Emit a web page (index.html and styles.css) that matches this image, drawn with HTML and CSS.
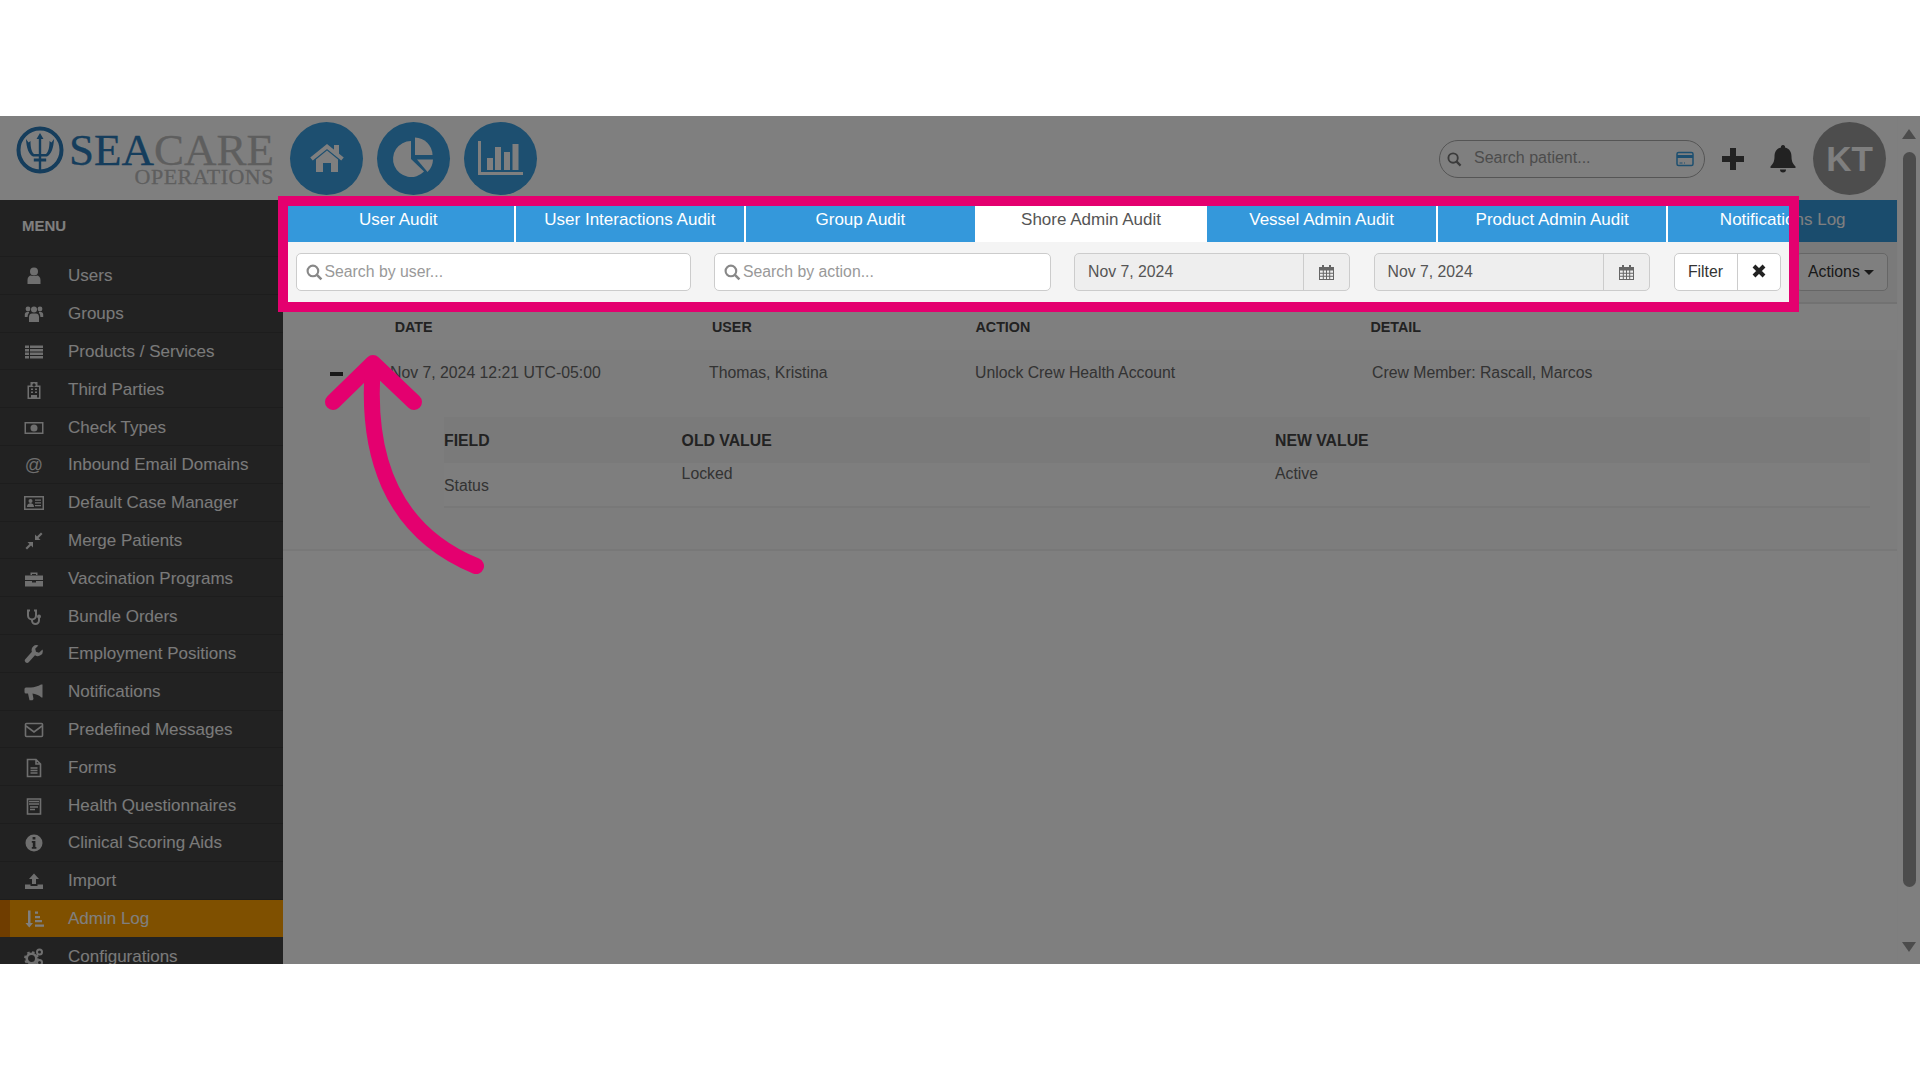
FILE: index.html
```html
<!DOCTYPE html>
<html lang="en">
<head>
<meta charset="utf-8">
<title>Seacare Operations - Admin Log</title>
<link rel="stylesheet" href="styles.css">
</head>
<body>
<div class="band-top"></div>
<div class="stage">
  <div class="app">
    <header class="topbar">
      <div class="logo">
        <svg class="logo-mark" viewBox="0 0 48 48">
          <circle cx="24" cy="24" r="21.5" fill="none" stroke="currentColor" stroke-width="4"/>
          <path d="M24 7l3.5 6h-2.3v19.5h5v3h-5V44h-2.4v-8.500h-5v-3h5V13h-2.300z" fill="currentColor"/>
          <path d="M10 13c.5 9 2.500 15 7 17.500h14C35.500 28 37.500 22 38 13l-2.500 3.500-2-1.500c0 6-.8 10.500-3.500 13H18c-2.700-2.500-3.500-7-3.500-13l-2 1.500z" fill="currentColor"/>
        </svg>
        <div class="logo-text">
          <div class="logo-name"><span class="logo-sea">SEA</span>CARE</div>
          <div class="logo-sub">OPERATIONS</div>
        </div>
      </div>
      <nav class="round-nav">
        <div class="round-btn">
          <svg viewBox="0 0 73 73"><path d="M26 37.500L37 28.500l11 9V50h-7v-9h-8v9h-7z" fill="#fff"/><path d="M44 23h5v10h-5z" fill="#fff"/><path d="M21.500 37L37 24.500 52.500 37" fill="none" stroke="#fff" stroke-width="4"/></svg>
        </div>
        <div class="round-btn">
          <svg viewBox="0 0 73 73"><path d="M34 37V19A18 18 0 1 0 47 49.500z" fill="#fff"/><path d="M38 15.500A18 18 0 0 1 55.500 33H38z" fill="#fff"/><path d="M40 37.500h16A18 18 0 0 1 50.500 50z" fill="#fff"/></svg>
        </div>
        <div class="round-btn">
          <svg viewBox="0 0 73 73"><path d="M15.500 19v32.500H59" fill="none" stroke="#fff" stroke-width="3"/><path d="M23 36h6v12h-6zM31 25h6v23h-6zM40 30h6v18h-6zM48.500 22h6v26h-6z" fill="#fff"/></svg>
        </div>
      </nav>
      <div class="top-right">
        <div class="patient-search">
          <svg class="ps-icon" viewBox="0 0 16 16"><circle cx="6.500" cy="6.500" r="5" fill="none" stroke="currentColor" stroke-width="2"/><path d="M10 10l4.500 4.500" stroke="currentColor" stroke-width="2.400"/></svg>
          <span class="ps-text">Search patient...</span>
          <svg class="ps-card" viewBox="0 0 18 16"><rect x="1" y="1.500" width="16" height="13" rx="1.500" fill="none" stroke="currentColor" stroke-width="1.500"/><path d="M1 4h16v3H1z" fill="currentColor"/><path d="M3.500 12h3M8 12h1" stroke="currentColor"/></svg>
        </div>
        <svg class="plus-icon" viewBox="0 0 22 22"><path d="M8 0h6v8h8v6h-8v8H8v-8H0V8h8z" fill="currentColor"/></svg>
        <svg class="bell-icon" viewBox="0 0 26 28"><path d="M13 0a2 2 0 0 1 2 2.500c4.500 1 6.500 4.500 6.500 9 0 5 1.500 7.500 4 10v1.500H.5v-1.500c2.500-2.500 4-5 4-10 0-4.500 2-8 6.500-9A2 2 0 0 1 13 0z" fill="currentColor"/><path d="M10 24.500h6a3 3 0 0 1-6 0z" fill="currentColor"/></svg>
        <div class="avatar">KT</div>
      </div>
    </header>
    <div class="body-row">
      <aside class="sidebar">
        <div class="menu-title">MENU</div>
        <ul class="menu">
          <li class="menu-item"><svg class="ico" viewBox="0 0 20 20"><circle cx="10" cy="5.500" r="4"/><path d="M3.500 18v-4c0-3 2-4.500 3.500-4.500 1 .8 5 .8 6 0 1.500 0 3.500 1.500 3.500 4.500v4z"/></svg>Users</li>
          <li class="menu-item"><svg class="ico" viewBox="0 0 20 20"><circle cx="4" cy="5" r="2.400"/><circle cx="16" cy="5" r="2.400"/><circle cx="10" cy="5.500" r="3"/><path d="M5 18v-5c0-2.500 1.500-3.500 3-3.500h4c1.500 0 3 1 3 3.500v5z"/><path d="M.8 13v-2.500C.8 9 1.800 8 3 8h2v1c-1 1-1.400 2.500-1.400 4zM19.200 13v-2.500C19.200 9 18.200 8 17 8h-2v1c1 1 1.400 2.500 1.400 4z"/></svg>Groups</li>
          <li class="menu-item"><svg class="ico" viewBox="0 0 20 20"><path d="M1 3.500h4V6H1zM6 3.500h13V6H6zM1 7h4v2.500H1zM6 7h13v2.500H6zM1 10.500h4V13H1zM6 10.500h13V13H6zM1 14h4v2.500H1zM6 14h13v2.500H6z"/></svg>Products / Services</li>
          <li class="menu-item"><svg class="ico" viewBox="0 0 20 20"><path fill-rule="evenodd" d="M3.500 5.500h3V2h7v3.500h3V19h-13zM5 7v10.500h2V15h6v2.500h2V7zM9 3.500v1H8v1h1v1h2v-1h1v-1h-1v-1zM7 8.500h2V10H7zM11 8.500h2V10h-2zM7 11.500h2V13H7zM11 11.500h2V13h-2z"/></svg>Third Parties</li>
          <li class="menu-item"><svg class="ico" viewBox="0 0 20 20"><path fill-rule="evenodd" d="M.5 4h19v12H.5zM2 5.500v9h16v-9zM10 6.500a3.500 3.500 0 1 1 0 7 3.500 3.500 0 0 1 0-7z"/></svg>Check Types</li>
          <li class="menu-item"><span class="ico ico-text">@</span>Inbound Email Domains</li>
          <li class="menu-item"><svg class="ico" viewBox="0 0 20 20"><path fill-rule="evenodd" d="M0 3h20v14H0zM1.500 4.500v11h17v-11z"/><circle cx="6.500" cy="8" r="2"/><path d="M3 14c0-3 2-3.800 3.500-3.800S10 11 10 14zM11 6.500h6v1.300h-6zM11 9.300h6v1.300h-6zM11 12h6v1.300h-6z"/></svg>Default Case Manager</li>
          <li class="menu-item"><svg class="ico" viewBox="0 0 20 20"><path d="M11 9V3.500l2 2 4-4L18.500 3l-4 4 2 2zM9 11v5.500l-2-2-4 4L1.500 17l4-4-2-2z"/></svg>Merge Patients</li>
          <li class="menu-item"><svg class="ico" viewBox="0 0 20 20"><path d="M1 6.500h18V11H1zM1 12h7v1.500h4V12h7v5.500H1zM6.500 6V3.500h7V6H12V5H8v1z"/></svg>Vaccination Programs</li>
          <li class="menu-item"><svg class="ico" viewBox="0 0 20 20"><g fill="none" stroke="currentColor" stroke-width="2"><path d="M6 3.500H4v5a4 4 0 0 0 8 0v-5h-2"/><path d="M8 12.500v1a3.500 3.500 0 0 0 7 0V11"/></g><circle cx="15" cy="9.500" r="2"/></svg>Bundle Orders</li>
          <li class="menu-item"><svg class="ico" viewBox="0 0 20 20"><path d="M18.500 5.500L15 8.700l-3-1-.8-3 3.200-3.200a5 5 0 0 0-6.500 6.300L1.500 15a2.200 2.200 0 0 0 3.200 3.200l6.300-6.900a5 5 0 0 0 7.500-5.800z"/></svg>Employment Positions</li>
          <li class="menu-item"><svg class="ico" viewBox="0 0 20 20"><path d="M18.500 2.500v13h-1c-3-2.500-6-3.700-9-4l1 5.500-1 1.200h-3L4 11.500H2A1.500 1.500 0 0 1 .5 10V7A1.500 1.500 0 0 1 2 5.500h5c3.500-.2 7-1.200 10-3z"/></svg>Notifications</li>
          <li class="menu-item"><svg class="ico ico-line" viewBox="0 0 20 20"><rect x="1.500" y="3.500" width="17" height="13" rx="1"/><path d="M2 6l8 6 8-6"/></svg>Predefined Messages</li>
          <li class="menu-item"><svg class="ico ico-line" viewBox="0 0 20 20"><path d="M3.500 1.500h8.500l4.500 4.500v12.500h-13zM12 1.500V6h4.500"/><path d="M6.500 10h7M6.500 12.500h7M6.500 15h7"/></svg>Forms</li>
          <li class="menu-item"><svg class="ico ico-line" viewBox="0 0 20 20"><path d="M3.500 3h13v15h-13z"/><path d="M5 5.500h10M5 8h10M6 11h8M6 13.500h5"/></svg>Health Questionnaires</li>
          <li class="menu-item"><svg class="ico" viewBox="0 0 20 20"><path fill-rule="evenodd" d="M10 1.500a8.500 8.500 0 1 0 0 17 8.500 8.500 0 0 0 0-17zM8.600 4h2.800v2.600H8.600zM7.800 8h3.600v6h1v1.800H7.800V14h1V9.800h-1z"/></svg>Clinical Scoring Aids</li>
          <li class="menu-item"><svg class="ico" viewBox="0 0 20 20"><path d="M10 2.500l5 5.500h-3v5H8V8H5zM1 13.500h5.500V15h7v-1.500H19V18H1z"/></svg>Import</li>
          <li class="menu-item is-active"><svg class="ico" viewBox="0 0 20 20"><path d="M4 1.500h2.500V14H9l-3.750 4.500L1.500 14H4zM11 2.500h3v2.200h-3zM11 7h5v2.200h-5zM11 11h7v2.200h-7zM11 15.500h9v2.200h-9z"/></svg>Admin Log</li>
          <li class="menu-item"><svg class="ico" viewBox="0 0 20 20"><circle cx="7.500" cy="11.500" r="4.800" fill="none" stroke="currentColor" stroke-width="2.600"/><circle cx="7.500" cy="11.500" r="6.400" fill="none" stroke="currentColor" stroke-width="2" stroke-dasharray="2.500 2.500"/><circle cx="15.500" cy="5" r="2.500" fill="none" stroke="currentColor" stroke-width="2"/><circle cx="15.500" cy="15.500" r="2.500" fill="none" stroke="currentColor" stroke-width="2"/></svg>Configurations</li>
        </ul>
      </aside>
      <main class="content">
        <div class="tabs">
          <div class="tab">User Audit</div>
          <div class="tab">User Interactions Audit</div>
          <div class="tab">Group Audit</div>
          <div class="tab is-current">Shore Admin Audit</div>
          <div class="tab">Vessel Admin Audit</div>
          <div class="tab">Product Admin Audit</div>
          <div class="tab">Notifications Log</div>
        </div>
        <div class="filters">
          <div class="field field-user">
            <svg class="field-search" viewBox="0 0 16 16"><circle cx="6.500" cy="6.500" r="5" fill="none" stroke="currentColor" stroke-width="2"/><path d="M10 10l4.500 4.500" stroke="currentColor" stroke-width="2.400"/></svg>
            <span class="placeholder">Search by user...</span>
          </div>
          <div class="field field-action">
            <svg class="field-search" viewBox="0 0 16 16"><circle cx="6.500" cy="6.500" r="5" fill="none" stroke="currentColor" stroke-width="2"/><path d="M10 10l4.500 4.500" stroke="currentColor" stroke-width="2.400"/></svg>
            <span class="placeholder">Search by action...</span>
          </div>
          <div class="date-field date-from">
            <span class="date-value">Nov 7, 2024</span>
            <span class="date-addon"><svg class="cal" viewBox="0 0 15 15"><path fill-rule="evenodd" d="M3 0h2v2h5V0h2v2h3v13H0V2h3zM1 5.500v2.300h2.800V5.500zM4.800 5.500v2.300h2.200V5.500zM8 5.500v2.300h2.200V5.500zM11.200 5.500v2.300H14V5.500zM1 8.800v2h2.800v-2zM4.800 8.800v2h2.200v-2zM8 8.800v2h2.200v-2zM11.200 8.800v2H14v-2zM1 11.800V14h2.800v-2.200zM4.800 11.800V14h2.200v-2.200zM8 11.800V14h2.200v-2.200zM11.200 11.800V14H14v-2.200z"/></svg></span>
          </div>
          <div class="date-field date-to">
            <span class="date-value">Nov 7, 2024</span>
            <span class="date-addon"><svg class="cal" viewBox="0 0 15 15"><path fill-rule="evenodd" d="M3 0h2v2h5V0h2v2h3v13H0V2h3zM1 5.500v2.300h2.800V5.500zM4.800 5.500v2.300h2.200V5.500zM8 5.500v2.300h2.200V5.500zM11.200 5.500v2.300H14V5.500zM1 8.800v2h2.800v-2zM4.800 8.800v2h2.200v-2zM8 8.800v2h2.200v-2zM11.200 8.800v2H14v-2zM1 11.800V14h2.800v-2.200zM4.800 11.800V14h2.200v-2.200zM8 11.800V14h2.200v-2.200zM11.200 11.800V14H14v-2.200z"/></svg></span>
          </div>
          <div class="btn-group">
            <span class="btn-filter">Filter</span>
            <span class="btn-clear"><svg viewBox="0 0 14 14"><path d="M2 2l10 10M12 2L2 12" stroke="currentColor" stroke-width="4"/></svg></span>
          </div>
          <div class="btn-actions">Actions<span class="caret"></span></div>
        </div>
        <div class="log-head">
          <span>DATE</span><span>USER</span><span>ACTION</span><span>DETAIL</span>
        </div>
        <section class="log-entry">
          <div class="log-row">
            <span class="minus"></span>
            <span>Nov 7, 2024 12:21 UTC-05:00</span>
            <span>Thomas, Kristina</span>
            <span>Unlock Crew Health Account</span>
            <span>Crew Member: Rascall, Marcos</span>
          </div>
          <div class="changes">
            <div class="changes-head"><span>FIELD</span><span>OLD VALUE</span><span>NEW VALUE</span></div>
            <div class="changes-row"><span class="cell-mid">Status</span><span>Locked</span><span>Active</span></div>
          </div>
        </section>
      </main>
    </div>
  </div>
  <div class="scrollbar">
    <span class="sb-up"></span>
    <span class="sb-thumb"></span>
    <span class="sb-down"></span>
  </div>
  <div class="spotlight"></div>
  <svg class="arrow" viewBox="0 0 180 250">
    <g fill="none" stroke="#e4006f" stroke-width="16" stroke-linecap="round" stroke-linejoin="round">
      <path d="M13 62L53 23l41 39"/>
      <path d="M53 25C46 110 68 190 156 226"/>
    </g>
  </svg>
</div>
<div class="band-bottom"></div>
</body>
</html>
```
FILE: styles.css
```css
* { box-sizing: border-box; }
html, body { margin: 0; padding: 0; background: #fff; }
body { font-family: "Liberation Sans", Arial, sans-serif; font-size: 15.800px; color: #666; width: 1920px; height: 1080px; overflow: hidden; }
ul { list-style: none; margin: 0; padding: 0; }

.band-top { height: 116px; }
.band-bottom { height: 116px; }
.stage { position: relative; height: 848px; display: flex; overflow: hidden; background: #fff; }
.app { width: 1897px; display: flex; flex-direction: column; }

/* header */
.topbar { height: 84px; flex: none; display: flex; align-items: flex-start; padding-right: 11px; }
.logo { width: 290px; flex: none; display: flex; padding: 10px 0 0 16px; }
.logo-mark { width: 48px; height: 48px; flex: none; color: #2a7ab8; }
.logo-text { margin-left: 3px; font-family: "Liberation Serif", "Times New Roman", serif; text-align: right; width: 207px; color: #bdbdbd; -webkit-text-stroke: .3px currentColor; }
.logo-name { font-size: 45px; line-height: 38px; margin-top: 5px; white-space: nowrap; }
.logo-sea { color: #2a7ab8; }
.logo-sub { font-size: 22px; line-height: 14px; margin-top: 1px; white-space: nowrap; letter-spacing: .5px; }
.round-nav { display: flex; gap: 14px; padding-top: 6px; }
.round-btn { width: 73px; height: 73px; border-radius: 50%; background: #3a9fe0; }
.round-btn svg { display: block; width: 73px; height: 73px; }
.top-right { margin-left: auto; display: flex; align-items: center; height: 73px; margin-top: 6px; }
.patient-search { width: 266px; height: 38px; border: 1px solid #aaa; border-radius: 19px; display: flex; align-items: center; padding: 0 9.500px 0 7.500px; color: #999; }
.ps-icon { width: 15px; height: 15px; color: #777; flex: none; margin-top: 2px; }
.ps-text { margin-left: 12px; flex: 1; font-size: 16px; margin-bottom: 1px; }
.ps-card { width: 18px; height: 16px; color: #3a9fe0; flex: none; }
.plus-icon { width: 22px; height: 22px; color: #444; margin-left: 17px; flex: none; }
.bell-icon { width: 26px; height: 28px; color: #444; margin-left: 26.500px; flex: none; }
.avatar { width: 73px; height: 73px; border-radius: 50%; background: #9b9b9b; color: #fff; font-weight: 700; font-size: 35px; display: flex; align-items: center; justify-content: center; margin-left: 17px; flex: none; }

/* sidebar */
.body-row { flex: 1; min-height: 0; display: flex; }
.sidebar { width: 283px; flex: none; background: #454545; color: #f4f4f4; overflow: hidden; }
.menu-title { height: 57px; padding: 17px 0 0 22px; font-weight: 700; font-size: 15px; line-height: 17px; color: #fff; border-bottom: 1px solid #3a3a3a; }
.menu-item { height: 37.810px; display: flex; align-items: center; padding: 2px 0 0 24px; font-size: 17px; border-bottom: 1px solid #3a3a3a; white-space: nowrap; }
.ico { width: 20px; height: 20px; flex: none; margin-right: 24px; fill: currentColor; color: #dedede; }
.ico-line { fill: none; stroke: currentColor; stroke-width: 1.600; }
.ico-text { display: block; text-align: center; line-height: 20px; font-size: 18px; }
.is-active { background: #ffa000; border-left: 10px solid #de7a00; padding-left: 14px; color: #fff; border-bottom: 0; }
.is-active .ico { color: #fff; }

/* content */
.content { flex: 1; min-width: 0; display: flex; flex-direction: column; }
.tabs { height: 42px; flex: none; display: grid; grid-template-columns: repeat(7, 1fr); background: #fff; }
.tab { background: #3498db; color: #fff; text-align: center; font-size: 17px; line-height: 40px; border-left: 2px solid #fff; white-space: nowrap; overflow: hidden; }
.tab:first-child { border-left: 0; }
.tab.is-current { background: #fff; color: #555; }
.filters { height: 62px; flex: none; display: flex; align-items: flex-start; padding: 11px 9px 0 12.500px; background: #f4f4f4; border-bottom: 2px solid #e4e4e4; }
.field { height: 38px; background: #fff; border: 1px solid #ccc; border-radius: 5px; display: flex; align-items: center; padding-left: 9px; flex: none; }
.field-user { width: 395px; }
.field-action { width: 336.500px; margin-left: 23.500px; }
.field-search { width: 17px; height: 17px; color: #888; flex: none; margin-top: 1px; }
.placeholder { color: #999; margin-left: 2px; }
.date-field { height: 38px; flex: none; margin-left: 23.500px; background: #eee; border: 1px solid #ccc; border-radius: 5px; display: flex; align-items: stretch; color: #555; }
.date-from { width: 276px; }
.date-to { width: 276.500px; }
.date-value { flex: 1; line-height: 36px; padding-left: 13px; }
.date-addon { width: 46px; border-left: 1px solid #ccc; display: flex; align-items: center; justify-content: center; }
.cal { width: 15px; height: 15px; fill: #666; }
.btn-group { width: 107px; height: 38px; flex: none; margin-left: 23.500px; background: #fff; border: 1px solid #ccc; border-radius: 5px; display: flex; color: #333; }
.btn-filter { width: 63px; line-height: 36px; text-align: center; border-right: 1px solid #ccc; }
.btn-clear { flex: 1; display: flex; align-items: flex-start; justify-content: center; padding-top: 10px; color: #222; }
.btn-clear svg { width: 14px; height: 14px; }
.btn-actions { width: 92px; height: 38px; flex: none; margin-left: auto; border: 1px solid #ccc; border-radius: 5px; background: #fff; line-height: 36px; padding-left: 11px; color: #333; display: flex; align-items: center; }
.caret { width: 0; height: 0; margin-left: 4px; border-left: 5px solid transparent; border-right: 5px solid transparent; border-top: 5px solid #333; }

.log-head { height: 46px; flex: none; display: grid; grid-template-columns: 317.300px 263.500px 395px 1fr; align-items: center; padding-left: 111.700px; font-size: 14.300px; font-weight: 700; color: #444; padding-bottom: 1px; }
.log-entry { height: 201px; flex: none; background: #fafafa; border-bottom: 2px solid #f0f0f0; }
.log-row { height: 67px; display: grid; grid-template-columns: 60px 319px 266px 397px 1fr; align-items: center; padding-left: 47px; padding-bottom: 21px; color: #666; }
.minus { width: 13px; height: 4px; background: #333; margin-top: 1px; }
.changes { margin-left: 161px; width: 1426px; }
.changes-head { height: 46px; display: grid; grid-template-columns: 237.600px 593.400px 1fr; align-items: center; padding-top: 1px; background: #f4f4f4; font-weight: 700; color: #444; }
.changes-row { height: 45px; display: grid; grid-template-columns: 237.600px 593.400px 1fr; padding-top: 2px; background: #fcfcfc; border-bottom: 2px solid #f0f0f0; color: #666; line-height: 18px; }
.cell-mid { padding-top: 12px; }

/* scrollbar */
.scrollbar { width: 23px; flex: none; display: flex; flex-direction: column; align-items: center; padding: 13px 0 12px; border-left: 1px solid #fdfdfd; }
.sb-up, .sb-down { width: 0; height: 0; border-left: 7.500px solid transparent; border-right: 7.500px solid transparent; flex: none; }
.sb-up { border-bottom: 10px solid #999; }
.sb-down { border-top: 10px solid #999; margin-top: auto; }
.sb-thumb { width: 13px; height: 735px; margin-top: 13px; flex: none; border-radius: 7px; background: #999; }

/* overlay layers */
.spotlight { position: absolute; left: 288px; top: 90px; width: 1501px; height: 96px; box-shadow: 0 0 0 10px #e4006f, 0 0 0 3000px rgba(0, 0, 0, .5); }
.arrow { position: absolute; left: 320px; top: 224px; width: 180px; height: 250px; }
```
